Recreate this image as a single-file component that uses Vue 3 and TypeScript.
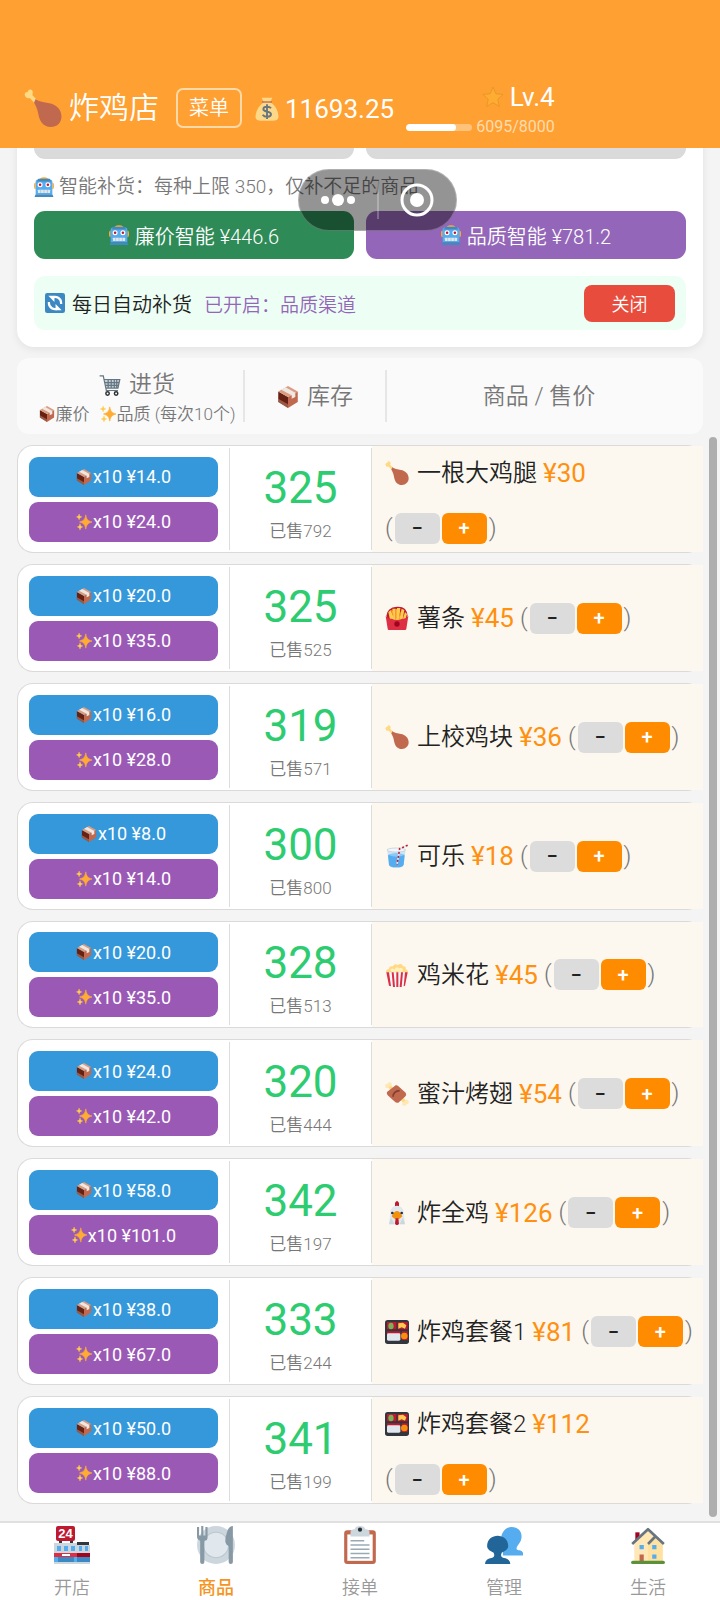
<script setup lang="ts">
import { ref, reactive } from 'vue'

interface Product {
  icon: string
  name: string
  price: number
  cheap: string
  quality: string
  stock: number
  sold: number
}

const products = reactive<Product[]>([
  { icon: 'leg', name: '一根大鸡腿', price: 30, cheap: '14.0', quality: '24.0', stock: 325, sold: 792 },
  { icon: 'fries', name: '薯条', price: 45, cheap: '20.0', quality: '35.0', stock: 325, sold: 525 },
  { icon: 'leg', name: '上校鸡块', price: 36, cheap: '16.0', quality: '28.0', stock: 319, sold: 571 },
  { icon: 'cup', name: '可乐', price: 18, cheap: '8.0', quality: '14.0', stock: 300, sold: 800 },
  { icon: 'popcorn', name: '鸡米花', price: 45, cheap: '20.0', quality: '35.0', stock: 328, sold: 513 },
  { icon: 'meat', name: '蜜汁烤翅', price: 54, cheap: '24.0', quality: '42.0', stock: 320, sold: 444 },
  { icon: 'rooster', name: '炸全鸡', price: 126, cheap: '58.0', quality: '101.0', stock: 342, sold: 197 },
  { icon: 'bento', name: '炸鸡套餐1', price: 81, cheap: '38.0', quality: '67.0', stock: 333, sold: 244 },
  { icon: 'bento', name: '炸鸡套餐2', price: 112, cheap: '50.0', quality: '88.0', stock: 341, sold: 199 },
])

const tabs = [
  { icon: 'store', label: '开店' },
  { icon: 'plate', label: '商品' },
  { icon: 'clipboard', label: '接单' },
  { icon: 'people', label: '管理' },
  { icon: 'house', label: '生活' },
]
const active = ref('商品')
const exp = 6095
const expMax = 8000
</script>

<template>
  <div class="app">
    <svg class="defs" width="0" height="0" aria-hidden="true">
      <symbol id="leg" viewBox="0 0 36 36">
        <path fill="#ffd983" d="M1 6.500C0 4.500 1.500 2.500 3.500 3C3.500 0.500 6.500-.5 7.800 1.500C8.800 3 8.200 4.500 8 6L13.500 11.500L10.500 14L5.500 8.500C4 9 2 9 1 6.500Z" />
        <path fill="#c1694f" d="M11 9.500C14 12 19 12.800 24 13.500C30 14.500 35.500 19 35.500 26C35.500 32 31 36 25.500 36C17.500 36 14.500 29.500 13.500 23.500C12.800 19.500 11.500 16 9.500 13Z" />
      </symbol>
      <symbol id="bag" viewBox="0 0 36 36">
        <path fill="#fdd888" d="M10 1H26L23 8C31 13 34 20 35 27C36 33 33 35.500 28 35.500H8C3 35.500 0 33 1 27C2 20 6 13 13 8Z" />
        <path fill="#bf6952" d="M10.500 6.500H25.500V8.500H10.500Z" />
        <path fill="none" stroke="#67757f" stroke-width="2.800" d="M24 17C22 14 13 13.500 12.500 18C12 23 24 20.500 24 26C24 31 14 30.500 11.500 26.500M18 11V33" />
      </symbol>
      <symbol id="star" viewBox="0 0 36 36">
        <path fill="#ffac33" stroke="#dd8d20" stroke-width="1" stroke-linejoin="round" d="M18 2L22.800 12.700L34.500 13.800L25.700 21.800L28.300 33.500L18 27.300L7.700 33.500L10.300 21.800L1.500 13.800L13.200 12.700Z" />
      </symbol>
      <symbol id="robot" viewBox="0 0 36 36">
        <path fill="#ffac33" d="M3 10Q0 10 0 16T3 22ZM33 10Q36 10 36 16T33 22ZM10 3Q18-2 26 3V7H10Z" />
        <path fill="#55acee" d="M3 9Q3 4 9 4H27Q33 4 33 9V31H3Z" />
        <path fill="#4289c1" d="M8 3H28L31 8H5ZM3 31H33L35 36H1Z" />
        <circle cx="11" cy="14" r="4.500" fill="#fff" /><circle cx="25" cy="14" r="4.500" fill="#fff" />
        <circle cx="11" cy="14" r="2.300" fill="#be1931" /><circle cx="25" cy="14" r="2.300" fill="#be1931" />
        <rect x="7" y="23" width="22" height="6" rx="1" fill="#e1e8ed" />
        <path stroke="#9badb9" d="M12 23V29M18 23V29M24 23V29" />
      </symbol>
      <symbol id="refresh" viewBox="0 0 36 36">
        <rect width="36" height="36" rx="4" fill="#3b88c3" />
        <path fill="none" stroke="#fff" stroke-width="4" d="M13 8.200A11 11 0 0 1 29 18V20M23 27.800A11 11 0 0 1 7 18V16" />
        <path fill="#fff" d="M6 5H17V16ZM30 31H19V20Z" />
      </symbol>
      <symbol id="cart" viewBox="0 0 36 36">
        <path fill="#c3d3de" d="M9 10H34L31 23H12Z" />
        <path fill="none" stroke="#66757f" stroke-width="2" d="M1 3H7L12 27H31M8 9H34L31 23H12M9 14H33M11 18.500H32M15 9V23M20 9V23M25 9V23M29 9V23" />
        <circle cx="14" cy="32" r="2.800" fill="#fff" stroke="#292f33" stroke-width="2.400" />
        <circle cx="28" cy="32" r="2.800" fill="#fff" stroke="#292f33" stroke-width="2.400" />
      </symbol>
      <symbol id="box" viewBox="0 0 36 36">
        <path fill="#662113" d="M2 9L18 18V36L2 26Z" />
        <path fill="#c1694f" d="M18 18L34 9V26L18 36Z" />
        <path fill="#d99e82" d="M2 9L18 0L34 9L18 18Z" />
        <path fill="#d99e82" opacity=".45" d="M2 21L18 30V36L2 26Z" />
        <path fill="#f1e7e2" d="M7 6L14 2L30 11V18L24 21V15Z" />
      </symbol>
      <symbol id="spark" viewBox="0 0 36 36">
        <path fill="#ffac33" d="M22 2C24 12 26 15 36 18C26 21 24 24 22 34C20 24 18 21 8 18C18 15 20 12 22 2Z" stroke="#ffac33" stroke-width="1.500" stroke-linejoin="round" />
        <path fill="#ffcc4d" stroke="#ffcc4d" d="M7 0C7.800 4 9 5.500 13 6.500C9 7.500 7.800 9 7 13C6.200 9 5 7.500 1 6.500C5 5.500 6.200 4 7 0ZM9 22C10 27 11 28.300 15 29C11 30 10 31.500 9 36C8 31.500 7 30 3 29C7 28.300 8 27 9 22Z" />
      </symbol>
      <symbol id="fries" viewBox="0 0 36 36">
        <path fill="#be1931" d="M2 15Q3 2 18 1T34 15L31 21H5Z" />
        <path fill="#ffcc4d" d="M5 9L9 6L14 23H8ZM11 4H16V22H12ZM18 3H23L21 23H16ZM25 4L29 6L26 23H21ZM30 9L33 12L30 22H26Z" />
        <path fill="#ffac33" d="M9 6L12 7L14 20ZM16 4L18 5V20H16ZM25 4L22 20H20Z" />
        <path fill="#dd2e44" d="M1 15Q5 20 10 19Q18 23 26 19Q31 20 35 15L32 34Q32 36 30 36H6Q4 36 4 34Z" />
        <circle cx="18" cy="27" r="4" fill="#a0041e" />
      </symbol>
      <symbol id="cup" viewBox="0 0 36 36">
        <path fill="#d3e3ef" d="M3 8H31L28 31Q27 36 17 36T6 31Z" />
        <path fill="#55acee" d="M4.500 17Q17 12 29.500 17L28 31Q27 35 17 35T6 31Z" />
        <path fill="#88c9f9" d="M4.500 16Q17 11 29.800 16Q17 22 4.500 16Z" />
        <ellipse cx="17" cy="9" rx="14" ry="3" fill="#f1f6fa" stroke="#b8c9d5" />
        <path fill="none" stroke="#e1e8ed" stroke-width="2.400" d="M34 2L22 7L18 31" />
        <path fill="none" stroke="#be1931" stroke-width="2.400" stroke-dasharray="3 3" d="M34 2L22 7L18 31" />
      </symbol>
      <symbol id="popcorn" viewBox="0 0 36 36">
        <path fill="#ffd983" d="M2 15Q0 10 6 9Q6 4 12 5Q14 0 19 3Q25-1 27 5Q32 4 31 9Q36 11 34 16Z" />
        <path fill="#fff0bd" d="M8 11Q10 6 14 10Q17 4 21 8Q27 5 27 12Q24 15 18 12Q12 16 8 11Z" />
        <path fill="#f5f8fa" d="M2 14H34L30 34Q18 38 6 34Z" />
        <path fill="#dd2e44" d="M2 14H6L9 35L6 34ZM10 14H13L15 36H12ZM17 14H20V36H17ZM24 14H27L25 36H22ZM30 14H34L30 34L28 35Z" />
      </symbol>
      <symbol id="meat" viewBox="0 0 36 36">
        <path fill="none" stroke="#ffd983" stroke-width="5" d="M6 6L30 30" />
        <circle cx="3.500" cy="6" r="3.300" fill="#ffe8b6" /><circle cx="7" cy="3.500" r="3.300" fill="#ffe8b6" />
        <circle cx="29" cy="32.500" r="3.300" fill="#ffe8b6" /><circle cx="32.500" cy="30" r="3.300" fill="#ffe8b6" />
        <path fill="#c1694f" d="M3 15L16 5Q19 4 21 7L31 16Q33 19 30 22L20 31Q17 32 14 29L4 20Q2 17 3 15Z" />
        <path fill="none" stroke="#82402f" stroke-width="2.500" d="M12 22C12 17 16 13 22 13" />
      </symbol>
      <symbol id="rooster" viewBox="0 0 36 36">
        <path fill="#be1931" d="M15 3Q18-3 21 3V12H15ZM14 28H22L20 35Q18 37 16 35Z" />
        <path fill="#e1e8ed" d="M8 17Q9 7 18 7T28 17L30 35H6Z" />
        <path fill="#ccd6dd" d="M6 35L9 25L14 35ZM30 35L27 25L22 35Z" />
        <path fill="#f4900c" d="M10 23Q14 15 18 15T26 23Q21 28 18 28T10 23Z" />
        <circle cx="11" cy="18" r="2" fill="#292f33" /><circle cx="25" cy="18" r="2" fill="#292f33" />
        <path fill="#be1931" d="M16 26H20L21 34Q18 38 15 34Z" />
      </symbol>
      <symbol id="bento" viewBox="0 0 36 36">
        <rect width="36" height="36" rx="4" fill="#31373d" />
        <path fill="#be1931" d="M3 3H17V14H3ZM19 3H34V14H19ZM3 17H23V30H3ZM25 17H34V30H25Z" />
        <ellipse cx="9" cy="9" rx="4" ry="5" fill="#77b255" />
        <path fill="#ffcc4d" d="M20 5L27 4L32 8L30 13L25 11L20 13Z" />
        <rect x="3" y="20" width="20" height="11" rx="2" fill="#e1e8ed" />
        <circle cx="29" cy="24" r="5" fill="#f4900c" />
      </symbol>
      <symbol id="plate" viewBox="0 0 36 36">
        <circle cx="18" cy="18" r="18" fill="#ccd6dd" />
        <circle cx="18" cy="18" r="12" fill="#e1e8ed" stroke="#b9c6cf" />
        <path fill="#8899a6" d="M0 1H2V9H4V0H6V9H8V1H10V11Q10 14 7 14V34Q7 36 5 36T3 34V14Q0 13 0 10ZM29 4Q31 0 34 0V34Q34 36 32 36T30 34V19Q26 18 27 11Z" />
      </symbol>
      <symbol id="clipboard" viewBox="0 0 36 36">
        <rect x="3" y="4" width="30" height="32" rx="3" fill="#c1694f" />
        <rect x="6" y="8" width="24" height="25" fill="#fff" />
        <path fill="#ccd6dd" d="M9 10V6Q9 3 13 3Q14 0 18 0T23 3Q27 3 27 6V10Z" />
        <circle cx="18" cy="3.500" r="2" fill="#292f33" />
        <path stroke="#99aab5" stroke-width="1.500" d="M9 14H22M9 18H27M9 22H27M9 26H27M9 30H27" />
      </symbol>
      <symbol id="people" viewBox="0 0 36 36">
        <path fill="#55acee" d="M17 28V21C13 15 15 1 25 1C35 1 37 11 32 17C29 21 29 23 33 23Q37 24 36 28Z" />
        <path fill="#226699" d="M0 36Q0 31 7 30Q10 29 8 25C5 24 2 22 2 19C2 6 22 6 22 19C22 22 19 24 16 25Q14 29 17 30Q24 31 24 36Z" />
      </symbol>
      <symbol id="house" viewBox="0 0 36 36">
        <path fill="#a0041e" d="M6 6H10V14H6Z" />
        <path fill="#ffe8b6" d="M5 15L18 3L32 15V34H5Z" />
        <path fill="#ffd983" d="M18 15L25 9L32 15V34H18Z" opacity=".4" />
        <path fill="none" stroke="#66757f" stroke-width="2.500" stroke-linejoin="round" d="M3 17L18 3L33 17M18 17L25 10" />
        <path fill="#55acee" d="M10 18H14V22H10ZM22 18H26V22H22ZM22 27H26V31H22Z" />
        <path fill="#c1694f" d="M10 27H14V34H10Z" />
        <rect x="2" y="33" width="32" height="3" rx="1.500" fill="#5c913b" />
      </symbol>
    </svg>

    <header class="top">
      <h1 class="shop"><svg class="i38"><use href="#leg" /></svg>炸鸡店</h1>
      <button class="menu">菜单</button>
      <div class="coins"><svg class="i26"><use href="#bag" /></svg>11693.25</div>
      <div class="level">
        <div class="lv"><svg class="i22"><use href="#star" /></svg>Lv.4</div>
        <div class="exp">
          <div class="bar"><div class="fill" :style="{ width: (exp / expMax) * 100 + '%' }"></div></div>
          <span>{{ exp }}/{{ expMax }}</span>
        </div>
      </div>
    </header>

    <main class="main">
      <section class="card">
        <div class="pair">
          <button class="restock plain" disabled aria-label="廉价"></button>
          <button class="restock plain" disabled aria-label="品质"></button>
        </div>
        <p class="hint"><svg class="i20"><use href="#robot" /></svg>智能补货：每种上限 350，仅补不足的商品</p>
        <div class="pair">
          <button class="restock green"><svg class="i20"><use href="#robot" /></svg>廉价智能 ¥446.6</button>
          <button class="restock violet"><svg class="i20"><use href="#robot" /></svg>品质智能 ¥781.2</button>
        </div>
        <div class="auto">
          <svg class="i20"><use href="#refresh" /></svg>
          <span class="auto-name">每日自动补货</span>
          <span class="auto-state">已开启：品质渠道</span>
          <button class="close">关闭</button>
        </div>
      </section>

      <table class="goods">
        <thead>
          <tr>
            <th scope="col">
              <div class="head-line"><svg class="i22"><use href="#cart" /></svg>进货</div>
              <div class="head-sub">
                <span><svg class="i16"><use href="#box" /></svg>廉价</span>
                <span><svg class="i16"><use href="#spark" /></svg>品质 (每次10个)</span>
              </div>
            </th>
            <th scope="col"><div class="head-line"><svg class="i22"><use href="#box" /></svg>库存</div></th>
            <th scope="col"><div class="head-line">商品 / 售价</div></th>
          </tr>
        </thead>
        <tbody>
          <tr v-for="p in products" :key="p.name">
            <td class="buy">
              <button class="order blue"><svg class="i16"><use href="#box" /></svg>x10 ¥{{ p.cheap }}</button>
              <button class="order purple"><svg class="i16"><use href="#spark" /></svg>x10 ¥{{ p.quality }}</button>
            </td>
            <td class="stock">
              <strong>{{ p.stock }}</strong>
              <span>已售{{ p.sold }}</span>
            </td>
            <td class="product">
              <span class="name"><svg class="i24"><use :href="'#' + p.icon" /></svg>{{ p.name }}</span>
              <span class="price">¥{{ p.price }}</span>
              <span class="adjust">
                (<button class="step" :aria-label="p.name + '降价'" @click="p.price--">−</button>
                <button class="step plus" :aria-label="p.name + '涨价'" @click="p.price++">+</button>)
              </span>
            </td>
          </tr>
        </tbody>
      </table>
    </main>

    <nav class="tabs">
      <button v-for="t in tabs" :key="t.label" :class="['tab', { on: active === t.label }]" @click="active = t.label">
        <svg v-if="t.icon === 'store'" class="i38" viewBox="0 0 36 38">
          <path fill="#31373d" d="M5 14H8V18H5ZM16 14H19V18H16ZM23 16H35V20H23Z" />
          <rect x="2" width="19" height="15" rx="2" fill="#be1931" />
          <text x="11.500" y="12" text-anchor="middle" class="store-text">24</text>
          <path fill="#ccd6dd" d="M0 17H23V27H0ZM23 19H36V27H23Z" />
          <path fill="#55acee" d="M3 20H7V25H3ZM10 20H14V25H10ZM17 20H21V25H17ZM25 20H28V25H25ZM31 20H34V25H31ZM0 31H23V37H0Z" />
          <path fill="#3b88c3" d="M4 31H20V37H4ZM23 31H36V37H23Z" />
          <path fill="#dd2e44" d="M0 27H23V31H0Z" /><path fill="#a0041e" d="M23 27H36V31H23Z" />
          <path fill="#fff" d="M8 28H16V30H8Z" /><path fill="#ccd6dd" d="M0 36H36V38H0Z" />
        </svg>
        <svg v-else class="i38"><use :href="'#' + t.icon" /></svg>
        <span>{{ t.label }}</span>
      </button>
    </nav>

    <div class="capsule">
      <button aria-label="更多">
        <svg width="36" height="16" viewBox="0 0 36 16" fill="#fff"><circle cx="5" cy="8" r="4" /><circle cx="18" cy="8" r="6" /><circle cx="31" cy="8" r="4" /></svg>
      </button>
      <i></i>
      <button aria-label="退出">
        <svg width="34" height="34" viewBox="0 0 34 34"><circle cx="17" cy="17" r="15" fill="none" stroke="#fff" stroke-width="3" /><circle cx="17" cy="17" r="7" fill="#fff" /></svg>
      </button>
    </div>
    <div class="thumb"></div>
  </div>
</template>

<style>
body { margin: 0; background: #f4f4f4; }
</style>

<style scoped>
.app {
  position: relative;
  display: flex;
  flex-direction: column;
  min-height: 100vh;
  background: #f4f4f4;
  color: #222;
  font-family: Roboto, "Noto Sans CJK SC", sans-serif;
  font-weight: 350;
  font-size: 20px;
}
.defs { position: absolute; }
button { font: inherit; color: inherit; border: 0; padding: 0; cursor: pointer; }
svg { flex: none; }
.i16 { width: 16px; height: 16px; }
.i20 { width: 20px; height: 20px; }
.i22 { width: 22px; height: 22px; }
.i24 { width: 24px; height: 24px; }
.i26 { width: 24px; height: 26px; }
.i38 { width: 38px; height: 38px; }
.store-text { font: bold 13px "Liberation Sans", sans-serif; fill: #fff; }

.top {
  display: flex;
  align-items: center;
  height: 80px;
  padding: 68px 24px 0;
  background: #ffa033;
  color: #fff;
}
.shop { display: flex; align-items: center; gap: 7px; margin: 0; font-size: 30px; font-weight: inherit; line-height: 40px; }
.menu { width: 66px; height: 40px; margin-left: 17px; border: 2px solid #ffd9a6; border-radius: 7px; background: transparent; line-height: 34px; }
.coins { display: flex; align-items: center; gap: 6px; margin-left: 13px; padding-top: 2px; font-size: 26px; font-weight: 400; line-height: 40px; }
.level { display: flex; flex-direction: column; align-items: flex-end; margin-left: 12px; padding-top: 4px; font-weight: 400; }
.lv { display: flex; align-items: center; gap: 6px; font-size: 26px; line-height: 34px; }
.exp { display: flex; align-items: center; gap: 4px; font-size: 16px; line-height: 26px; color: #ffdcae; }
.bar { width: 66px; height: 7px; border-radius: 4px; background: #ffc27a; overflow: hidden; }
.fill { height: 100%; border-radius: 4px; background: #fff; }

.main { flex: 1; display: flex; flex-direction: column; padding: 0 17px 17px; overflow: hidden; }
.card { margin-top: -54px; padding: 17px; border-radius: 17px; background: #fff; box-shadow: 0 2px 8px rgba(0, 0, 0, .08); }
.pair { display: flex; gap: 12px; }
.restock { flex: 1; display: flex; align-items: center; justify-content: center; gap: 6px; height: 48px; border-radius: 11px; color: #fff; }
.plain { background: #dadada; }
.green { background: #2e8b57; }
.violet { background: #9466b9; }
.hint { display: flex; align-items: center; gap: 5px; margin: 14px 0 10px; font-size: 19px; line-height: 28px; color: #777; }
.auto { display: flex; align-items: center; height: 54px; margin-top: 17px; padding: 0 11px; border-radius: 11px; background: #edfff4; }
.auto-name { margin-left: 7px; }
.auto-state { margin-left: 12px; font-size: 19px; color: #9466b9; }
.close { width: 91px; height: 37px; margin-left: auto; border-radius: 8px; background: #e74c3c; color: #fff; font-size: 18px; }

.goods { flex: 1; display: flex; flex-direction: column; gap: 11px; margin-top: 11px; }
thead { display: block; border-radius: 12px; background: #fafafa; }
thead tr { display: grid; grid-template-columns: 214px 142px 1fr; padding: 12px; }
th { display: flex; flex-direction: column; align-items: center; justify-content: center; box-sizing: border-box; height: 52px; padding: 2px 0 0; font-size: 23px; font-weight: inherit; color: #777; }
th:first-child { padding: 5px 0 0 2px; }
th + th { border-left: 2px solid #e6e6e6; }
.head-line { display: flex; align-items: center; gap: 8px; line-height: 30px; }
.head-sub { display: flex; gap: 10px; font-size: 17px; line-height: 28px; white-space: nowrap; }
.head-sub span { display: flex; align-items: center; gap: 1px; }

tbody { flex: 1; display: grid; grid-auto-rows: 1fr; gap: 11px; }
tbody tr { display: grid; grid-template-columns: 211px 143px 1fr; border: 1px solid #dcdad8; border-right: 0; border-radius: 16px; background: #fff; }
td { padding: 0; }
.buy { display: flex; flex-direction: column; justify-content: center; gap: 5px; padding: 1px 11px 0; }
.order { display: flex; align-items: center; justify-content: center; gap: 1px; height: 40px; border-radius: 9px; color: #fff; font-size: 18px; font-weight: 400; }
.blue { background: #3498db; }
.purple { background: #9b59b6; }
.stock { display: flex; flex-direction: column; align-items: center; justify-content: center; margin: 2px 0; padding-top: 6px; border: 1px solid #ddd; border-width: 0 1px; color: #777; font-size: 17px; }
.stock strong { font-size: 44px; font-weight: 400; line-height: 58px; color: #2ecc71; }
.stock span { line-height: 28px; }
.product { display: flex; flex-wrap: wrap; align-items: center; align-content: center; gap: 22px 6px; padding: 1px 6px 0 13px; background: #fcf8ef; font-size: 24px; }
.name { display: flex; align-items: center; gap: 8px; line-height: 36px; }
.price { font-size: 26px; font-weight: 400; line-height: 36px; color: #ff9010; }
.adjust { display: flex; align-items: center; gap: 2px; line-height: 31px; color: #777; }
.step { width: 45px; height: 31px; border-radius: 6px; background: #dcdcdc; color: #222; font-size: 20px; font-weight: 500; line-height: 28px; }
.plus { background: #ff8c00; color: #fff; }

.tabs { display: grid; grid-template-columns: repeat(5, 1fr); border-top: 2px solid #e0e0e0; background: #fff; }
.tab { display: flex; flex-direction: column; align-items: center; gap: 11px; height: 77px; padding-top: 3px; background: transparent; color: #999; font-size: 18px; line-height: 26px; }
.on { color: #f5951d; font-weight: 500; }

.capsule {
  position: absolute;
  top: 169px;
  left: 298px;
  display: flex;
  align-items: center;
  justify-content: space-between;
  width: 157px;
  height: 60px;
  border: 1px solid rgba(255, 255, 255, .25);
  border-radius: 31px;
  background: rgba(0, 0, 0, .42);
}
.capsule button { flex: 1; display: flex; align-items: center; justify-content: center; background: transparent; }
.capsule i { width: 2px; height: 38px; background: rgba(255, 255, 255, .25); }
.thumb { position: absolute; top: 437px; right: 3px; bottom: 83px; width: 8px; border-radius: 4px; background: #aeaeae; }
</style>
